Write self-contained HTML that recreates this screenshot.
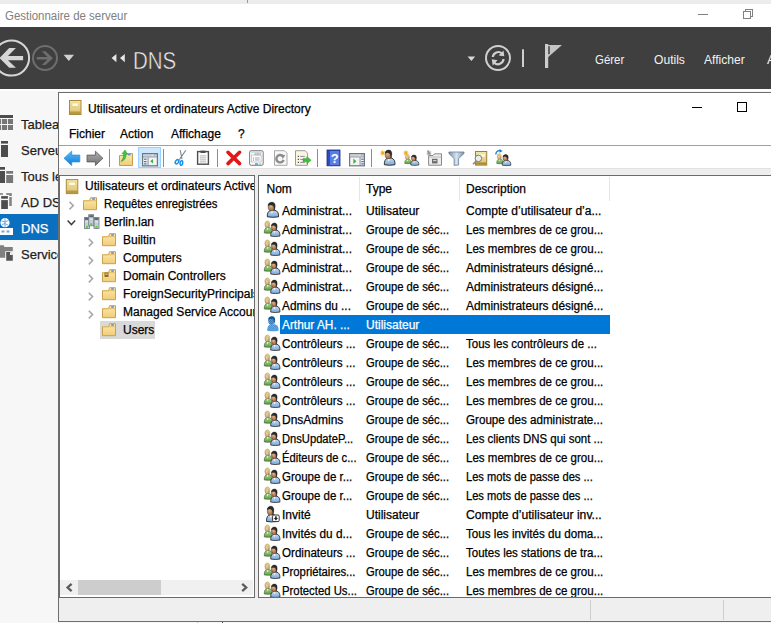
<!DOCTYPE html>
<html><head><meta charset="utf-8">
<style>
*{margin:0;padding:0;box-sizing:border-box}
html,body{width:771px;height:623px;overflow:hidden;background:#f7f7f7;font-family:"Liberation Sans",sans-serif;position:relative}
.a{position:absolute}
.t,.c,.tr,.nav{-webkit-text-stroke:0.25px currentColor}
.t{position:absolute;white-space:nowrap;font-size:12px;line-height:14px;color:#000}
#topstrip{left:0;top:0;width:771px;height:4px;background:#ececec}
#smtitle{left:0;top:4px;width:771px;height:23px;background:#fff}
#hdr{left:0;top:27px;width:771px;height:62px;background:#3f3f3f}
.nav{position:absolute;left:21px;font-size:13px;color:#1e1e1e;white-space:nowrap;line-height:15px}
#win{left:58px;top:92px;width:720px;height:530px;background:#fff;border:1px solid #6e6e6e;border-right:none}
.pane{position:absolute;background:#fff;border:1px solid #6e6e6e;overflow:hidden}
.c{position:absolute;white-space:nowrap;font-size:12px;line-height:19px;color:#000}
.c span{display:inline-block;transform-origin:0 0}
.tr{position:absolute;white-space:nowrap;font-size:12px;line-height:18px;color:#000}
</style></head><body>
<div class="a" id="topstrip"></div>
<div class="a" style="left:247px;top:0;width:1px;height:3px;background:#9a9a9a"></div>
<div class="a" id="smtitle"></div>
<div class="t" style="left:5px;top:9px;color:#808080;font-size:12px;-webkit-text-stroke:0"><span style="display:inline-block;transform-origin:0 0;transform:scaleX(0.955)">Gestionnaire de serveur</span></div>
<div class="a" style="left:698px;top:14px;width:10px;height:1px;background:#808080"></div>
<div class="a" style="left:745px;top:9px;width:8px;height:8px;border:1px solid #808080"></div>
<div class="a" style="left:743px;top:11px;width:8px;height:8px;border:1px solid #808080;background:#fff"></div>

<div class="a" id="hdr"></div>
<svg class="a" style="left:0;top:27px" width="771" height="62" viewBox="0 27 771 62">
 <circle cx="11.5" cy="58" r="17.6" fill="none" stroke="#d6d6d6" stroke-width="2"/>
 <path d="M9.2 48.1 L15.9 48.1 L8 55.9 L23.1 55.9 L23.1 60.2 L8 60.2 L15.9 67.7 L9.2 67.7 L-0.5 57.9 Z" fill="#d6d6d6"/>
 <circle cx="45" cy="58" r="12" fill="none" stroke="#6e6e6e" stroke-width="2"/>
 <path d="M41.8 51.2 L45.4 51.2 L53 58.2 L45.4 64.9 L41.8 64.9 L47.5 59.6 L36.7 59.6 L36.7 57 L47.5 57 Z" fill="#6e6e6e"/>
 <path d="M63.6 54.8 L74 54.8 L68.8 60.9z" fill="#d0d0d0"/>
 <path d="M116.4 54 L116.4 62.2 L111.6 58.1z M124.8 54 L124.8 62.2 L120 58.1z" fill="#e8e8e8"/>
 <path d="M467.6 56.6 L475.2 56.6 L471.4 61.1z" fill="#d8d8d8"/>
 <circle cx="498" cy="58" r="12" fill="none" stroke="#d0d0d0" stroke-width="2"/>
 <path d="M492.8 57 A5.5 5.5 0 0 1 502 53.5" fill="none" stroke="#d0d0d0" stroke-width="2.2"/>
 <path d="M503.5 50.5 L504.3 56.2 L498.6 55.6z" fill="#d0d0d0"/>
 <path d="M503.5 59 A5.5 5.5 0 0 1 494.2 62.7" fill="none" stroke="#d0d0d0" stroke-width="2.2"/>
 <path d="M492.7 65.6 L491.8 59.3 L497.6 60.3z" fill="#d0d0d0"/>
 <rect x="522" y="49.3" width="2" height="17.7" fill="#cfcfcf"/>
 <rect x="545" y="44" width="3.2" height="24" fill="#cdcdcd"/>
 <path d="M548 44.9 L562 44.9 L548 57.2z" fill="#c4c4c4"/>
 <rect x="548.2" y="46.2" width="1.6" height="8" fill="#4a4a4a"/>
</svg>
<div class="t" style="left:133px;top:48px;font-size:23px;line-height:27px;color:#f0f0f0;-webkit-text-stroke:0.5px #3f3f3f"><span style="display:inline-block;transform-origin:0 0;transform:scaleX(0.89)">DNS</span></div>
<div class="t" style="left:595px;top:52px;font-size:13px;line-height:15px;color:#f2f2f2;-webkit-text-stroke:0"><span style="display:inline-block;transform-origin:0 0;transform:scaleX(0.88)">Gérer</span></div>
<div class="t" style="left:654px;top:52px;font-size:13px;line-height:15px;color:#f2f2f2;-webkit-text-stroke:0"><span style="display:inline-block;transform-origin:0 0;transform:scaleX(0.93)">Outils</span></div>
<div class="t" style="left:704px;top:52px;font-size:13px;line-height:15px;color:#f2f2f2;-webkit-text-stroke:0"><span style="display:inline-block;transform-origin:0 0;transform:scaleX(0.93)">Afficher</span></div>
<div class="t" style="left:767px;top:52px;font-size:13px;line-height:15px;color:#f2f2f2;-webkit-text-stroke:0">Aide</div>
<!-- nav -->
<div class="a" style="left:0;top:214px;width:58px;height:26px;background:#0a6fbf"></div>
<div class="nav" style="top:117px">Tableau de bord</div>
<div class="nav" style="top:143px">Serveur local</div>
<div class="nav" style="top:169px">Tous les serveurs</div>
<div class="nav" style="top:195px">AD DS</div>
<div class="nav" style="top:221px;color:#fff">DNS</div>
<div class="nav" style="top:247px">Services de fichiers</div>

<!-- AD window -->
<div class="a" style="left:0;top:89px;width:771px;height:2px;background:#fdfdfd"></div>
<div class="a" id="win"></div>
<div class="a" style="left:69px;top:100px;width:12px;height:15px;background:#e0c060"></div>
<div class="t" style="left:88px;top:102px">Utilisateurs et ordinateurs Active Directory</div>
<div class="a" style="left:692px;top:107px;width:10px;height:1px;background:#000"></div>
<div class="a" style="left:737px;top:102px;width:10px;height:10px;border:1px solid #000"></div>
<div class="t" style="left:69px;top:127px">Fichier</div>
<div class="t" style="left:120px;top:127px">Action</div>
<div class="t" style="left:171px;top:127px">Affichage</div>
<div class="t" style="left:238px;top:127px">?</div>
<div class="a" style="left:59px;top:145px;width:712px;height:1px;background:#a0a0a0"></div>
<div class="a" style="left:59px;top:168px;width:712px;height:7px;background:#eeeeee;border-top:1px solid #e2e2e2"></div>
<!-- panes -->
<div class="a" style="left:59px;top:175px;width:196px;height:423px;border:1px solid #6b6b6b;background:#fff"></div>
<div class="a" style="left:255px;top:175px;width:3px;height:423px;background:#eeeeee"></div>
<div class="a" style="left:258px;top:175px;width:520px;height:423px;border:1px solid #6b6b6b;background:#fff"></div>
<div class="a" style="left:59px;top:598px;width:712px;height:23px;background:#efefef"></div>
<div class="a" style="left:590px;top:600px;width:1px;height:20px;background:#cdcdcd"></div>
<div class="a" style="left:723px;top:600px;width:1px;height:20px;background:#cdcdcd"></div>
<div class="a" style="left:197px;top:622px;width:1px;height:1px;background:#c8c8c8"></div>
<div class="a" style="left:222px;top:622px;width:1px;height:1px;background:#505050"></div>
<!--TREE START-->
<div class="a" style="left:0;top:0;width:254px;height:597px;overflow:hidden">
<div class="tr" style="left:85px;top:177px">Utilisateurs et ordinateurs Active Directory</div>
<div class="tr" style="left:104px;top:195px"><span style="display:inline-block;transform-origin:0 0;transform:scaleX(0.94)">Requêtes enregistrées</span></div>
<div class="tr" style="left:104px;top:213px">Berlin.lan</div>
<div class="tr" style="left:123px;top:231px">Builtin</div>
<div class="tr" style="left:123px;top:249px">Computers</div>
<div class="tr" style="left:123px;top:267px">Domain Controllers</div>
<div class="tr" style="left:123px;top:285px">ForeignSecurityPrincipals</div>
<div class="tr" style="left:123px;top:303px">Managed Service Accounts</div>
<div class="a" style="left:100px;top:321px;width:55px;height:18px;background:#d9d9d9"></div>
<div class="tr" style="left:123px;top:321px">Users</div>
</div>
<div class="a" style="left:60px;top:580px;width:193px;height:15px;background:#f0f0f0"></div>
<div class="a" style="left:78px;top:580px;width:83px;height:15px;background:#cdcdcd"></div>
<svg class="a" style="left:60px;top:580px" width="193" height="15" viewBox="60 580 193 15"><path d="M71.6 583.8 L67.6 587.5 L71.6 591.2" fill="none" stroke="#5a5a5a" stroke-width="2.3"/><path d="M242.2 583.8 L246.2 587.5 L242.2 591.2" fill="none" stroke="#5a5a5a" stroke-width="2.3"/></svg>

<!--TREE END-->
<div class="a" style="left:0;top:0;width:771px;height:597px;overflow:hidden">
<div class="c" style="left:266.5px;top:180px">Nom</div>
<div class="c" style="left:366px;top:180px">Type</div>
<div class="c" style="left:466px;top:180px">Description</div>
<div class="a" style="left:359px;top:177px;width:1px;height:24px;background:#e5e5e5"></div>
<div class="a" style="left:459px;top:177px;width:1px;height:24px;background:#e5e5e5"></div>
<div class="a" style="left:609px;top:177px;width:1px;height:24px;background:#e5e5e5"></div>
<!--LIST START-->
<div class="c" style="left:282.0px;top:202px"><span>Administrat...</span></div>
<div class="c" style="left:366.0px;top:202px"><span>Utilisateur</span></div>
<div class="c" style="left:466.0px;top:202px"><span>Compte d’utilisateur d’a...</span></div>
<div class="c" style="left:282.0px;top:221px"><span>Administrat...</span></div>
<div class="c" style="left:366.0px;top:221px"><span style="transform:scaleX(0.936)">Groupe de séc...</span></div>
<div class="c" style="left:466.0px;top:221px"><span style="transform:scaleX(0.962)">Les membres de ce grou...</span></div>
<div class="c" style="left:282.0px;top:240px"><span>Administrat...</span></div>
<div class="c" style="left:366.0px;top:240px"><span style="transform:scaleX(0.936)">Groupe de séc...</span></div>
<div class="c" style="left:466.0px;top:240px"><span style="transform:scaleX(0.962)">Les membres de ce grou...</span></div>
<div class="c" style="left:282.0px;top:259px"><span>Administrat...</span></div>
<div class="c" style="left:366.0px;top:259px"><span style="transform:scaleX(0.936)">Groupe de séc...</span></div>
<div class="c" style="left:466.0px;top:259px"><span style="transform:scaleX(0.990)">Administrateurs désigné...</span></div>
<div class="c" style="left:282.0px;top:278px"><span>Administrat...</span></div>
<div class="c" style="left:366.0px;top:278px"><span style="transform:scaleX(0.936)">Groupe de séc...</span></div>
<div class="c" style="left:466.0px;top:278px"><span style="transform:scaleX(0.990)">Administrateurs désigné...</span></div>
<div class="c" style="left:282.0px;top:297px"><span style="transform:scaleX(0.984)">Admins du ...</span></div>
<div class="c" style="left:366.0px;top:297px"><span style="transform:scaleX(0.936)">Groupe de séc...</span></div>
<div class="c" style="left:466.0px;top:297px"><span style="transform:scaleX(0.990)">Administrateurs désigné...</span></div>
<div class="lr" style="top:315px">
<div class="a" style="left:280px;top:315px;width:330px;height:19px;background:#0078d7"></div>
<div class="c" style="left:282.0px;top:316px;color:#fff"><span style="transform:scaleX(0.988)">Arthur AH. ...</span></div>
<div class="c" style="left:366.0px;top:316px;color:#fff"><span>Utilisateur</span></div>
<div class="c" style="left:282.0px;top:335px"><span style="transform:scaleX(0.975)">Contrôleurs ...</span></div>
<div class="c" style="left:366.0px;top:335px"><span style="transform:scaleX(0.936)">Groupe de séc...</span></div>
<div class="c" style="left:466.0px;top:335px"><span style="transform:scaleX(0.957)">Tous les contrôleurs de ...</span></div>
<div class="c" style="left:282.0px;top:354px"><span style="transform:scaleX(0.975)">Contrôleurs ...</span></div>
<div class="c" style="left:366.0px;top:354px"><span style="transform:scaleX(0.936)">Groupe de séc...</span></div>
<div class="c" style="left:466.0px;top:354px"><span style="transform:scaleX(0.962)">Les membres de ce grou...</span></div>
<div class="c" style="left:282.0px;top:373px"><span style="transform:scaleX(0.975)">Contrôleurs ...</span></div>
<div class="c" style="left:366.0px;top:373px"><span style="transform:scaleX(0.936)">Groupe de séc...</span></div>
<div class="c" style="left:466.0px;top:373px"><span style="transform:scaleX(0.962)">Les membres de ce grou...</span></div>
<div class="c" style="left:282.0px;top:392px"><span style="transform:scaleX(0.975)">Contrôleurs ...</span></div>
<div class="c" style="left:366.0px;top:392px"><span style="transform:scaleX(0.936)">Groupe de séc...</span></div>
<div class="c" style="left:466.0px;top:392px"><span style="transform:scaleX(0.962)">Les membres de ce grou...</span></div>
<div class="c" style="left:282.0px;top:411px"><span>DnsAdmins</span></div>
<div class="c" style="left:366.0px;top:411px"><span style="transform:scaleX(0.936)">Groupe de séc...</span></div>
<div class="c" style="left:466.0px;top:411px"><span style="transform:scaleX(0.969)">Groupe des administrate...</span></div>
<div class="c" style="left:282.0px;top:430px"><span style="transform:scaleX(0.931)">DnsUpdateP...</span></div>
<div class="c" style="left:366.0px;top:430px"><span style="transform:scaleX(0.936)">Groupe de séc...</span></div>
<div class="c" style="left:466.0px;top:430px"><span style="transform:scaleX(0.951)">Les clients DNS qui sont ...</span></div>
<div class="c" style="left:282.0px;top:449px"><span style="transform:scaleX(0.931)">Éditeurs de c...</span></div>
<div class="c" style="left:366.0px;top:449px"><span style="transform:scaleX(0.936)">Groupe de séc...</span></div>
<div class="c" style="left:466.0px;top:449px"><span style="transform:scaleX(0.962)">Les membres de ce grou...</span></div>
<div class="c" style="left:282.0px;top:468px"><span style="transform:scaleX(0.958)">Groupe de r...</span></div>
<div class="c" style="left:366.0px;top:468px"><span style="transform:scaleX(0.936)">Groupe de séc...</span></div>
<div class="c" style="left:466.0px;top:468px"><span style="transform:scaleX(0.927)">Les mots de passe des ...</span></div>
<div class="c" style="left:282.0px;top:487px"><span style="transform:scaleX(0.958)">Groupe de r...</span></div>
<div class="c" style="left:366.0px;top:487px"><span style="transform:scaleX(0.936)">Groupe de séc...</span></div>
<div class="c" style="left:466.0px;top:487px"><span style="transform:scaleX(0.927)">Les mots de passe des ...</span></div>
<div class="c" style="left:282.0px;top:506px"><span>Invité</span></div>
<div class="c" style="left:366.0px;top:506px"><span>Utilisateur</span></div>
<div class="c" style="left:466.0px;top:506px"><span style="transform:scaleX(1.014)">Compte d’utilisateur inv...</span></div>
<div class="c" style="left:282.0px;top:525px"><span style="transform:scaleX(0.985)">Invités du d...</span></div>
<div class="c" style="left:366.0px;top:525px"><span style="transform:scaleX(0.936)">Groupe de séc...</span></div>
<div class="c" style="left:466.0px;top:525px"><span style="transform:scaleX(0.969)">Tous les invités du doma...</span></div>
<div class="c" style="left:282.0px;top:544px"><span style="transform:scaleX(0.967)">Ordinateurs ...</span></div>
<div class="c" style="left:366.0px;top:544px"><span style="transform:scaleX(0.936)">Groupe de séc...</span></div>
<div class="c" style="left:466.0px;top:544px"><span style="transform:scaleX(0.960)">Toutes les stations de tra...</span></div>
<div class="c" style="left:282.0px;top:563px"><span style="transform:scaleX(0.942)">Propriétaires...</span></div>
<div class="c" style="left:366.0px;top:563px"><span style="transform:scaleX(0.936)">Groupe de séc...</span></div>
<div class="c" style="left:466.0px;top:563px"><span style="transform:scaleX(0.962)">Les membres de ce grou...</span></div>
<div class="c" style="left:282.0px;top:582px"><span style="transform:scaleX(0.944)">Protected Us...</span></div>
<div class="c" style="left:366.0px;top:582px"><span style="transform:scaleX(0.936)">Groupe de séc...</span></div>
<div class="c" style="left:466.0px;top:582px"><span style="transform:scaleX(0.962)">Les membres de ce grou...</span></div>
<!--LIST END-->
</div>
<!--ICONS START-->
<svg class="a" style="left:0;top:0;pointer-events:none" width="771" height="623" viewBox="0 0 771 623">
<defs>
<linearGradient id="gBody" x1="0" y1="0" x2="0" y2="1"><stop offset="0" stop-color="#c4dcf4"/><stop offset="1" stop-color="#7aa6d6"/></linearGradient>
<linearGradient id="gGreen" x1="0" y1="0" x2="0" y2="1"><stop offset="0" stop-color="#a8d890"/><stop offset="1" stop-color="#5a9a40"/></linearGradient>
<radialGradient id="gFace" cx="0.4" cy="0.35" r="0.7"><stop offset="0" stop-color="#e8b890"/><stop offset="1" stop-color="#9a6038"/></radialGradient>
<radialGradient id="gFace2" cx="0.4" cy="0.35" r="0.7"><stop offset="0" stop-color="#f4dcc0"/><stop offset="1" stop-color="#c09060"/></radialGradient>
<linearGradient id="gFold" x1="0" y1="0" x2="0" y2="1"><stop offset="0" stop-color="#fdeab0"/><stop offset="1" stop-color="#f0cc78"/></linearGradient>
<linearGradient id="gBook" x1="0" y1="0" x2="0" y2="1"><stop offset="0" stop-color="#f6e6a8"/><stop offset="1" stop-color="#dcc070"/></linearGradient>
<linearGradient id="gBlue" x1="0" y1="0" x2="0" y2="1"><stop offset="0" stop-color="#58c0f8"/><stop offset="1" stop-color="#0a78d8"/></linearGradient>
<linearGradient id="gGray" x1="0" y1="0" x2="0" y2="1"><stop offset="0" stop-color="#b0b0b0"/><stop offset="1" stop-color="#707070"/></linearGradient>
<linearGradient id="gFun" x1="0" y1="0" x2="1" y2="0"><stop offset="0" stop-color="#7890a8"/><stop offset="0.5" stop-color="#d8e4f0"/><stop offset="1" stop-color="#7890a8"/></linearGradient>
<pattern id="dith" width="2" height="2" patternUnits="userSpaceOnUse"><rect width="2" height="2" fill="#1a7ad0"/><rect width="1" height="1" fill="#9ac0e8"/><rect x="1" y="1" width="1" height="1" fill="#9ac0e8"/></pattern>
<pattern id="dith2" width="2" height="2" patternUnits="userSpaceOnUse"><rect width="2" height="2" fill="#1a7ad0"/><rect width="1" height="1" fill="#c08a60"/><rect x="1" y="1" width="1" height="1" fill="#c08a60"/></pattern>
<pattern id="dith3" width="2" height="2" patternUnits="userSpaceOnUse"><rect width="2" height="2" fill="#1a7ad0"/><rect width="1" height="1" fill="#303030"/><rect x="1" y="1" width="1" height="1" fill="#303030"/></pattern>
<clipPath id="clipList"><rect x="259" y="176" width="512" height="421"/></clipPath>
<g id="person">
 <path d="M0.4 15.2 C0.1 11.5 1.6 8.8 4.5 8.4 L8 8.4 C10.8 8.8 12.2 11.5 11.9 15.2 Q6 16.3 0.4 15.2Z" fill="url(#gBody)" stroke="#1a1a1a" stroke-width="0.9"/>
 <path d="M3.9 8.5 L5.1 12.2 L6.4 8.5Z" fill="#fff"/>
 <ellipse cx="4.6" cy="4.8" rx="3.3" ry="4.3" fill="url(#gFace)" stroke="#2a2a2a" stroke-width="0.5"/>
 <path d="M1.2 3.4 C1.4 0.9 3.4 -0.1 5.3 0 C7.6 0.1 8.7 1.8 8.4 4.4 L7.7 8.6 C7.7 5.8 7.1 3.4 5.1 3 C3.6 2.7 2.2 2.8 1.2 3.4Z" fill="#2a2a2a" stroke="#1a1a1a" stroke-width="0.4"/>
</g>
<g id="personG">
 <path d="M0.4 15.2 C0.1 11.5 1.6 8.8 4.5 8.4 L8 8.4 C10.8 8.8 12.2 11.5 11.9 15.2 Q6 16.3 0.4 15.2Z" fill="url(#gGreen)" stroke="#2e4a20" stroke-width="0.7"/>
 <path d="M3.9 8.5 L5.1 12.2 L6.4 8.5Z" fill="#fff"/>
 <ellipse cx="4.8" cy="4.8" rx="3.3" ry="4.3" fill="url(#gFace2)" stroke="#6a5030" stroke-width="0.4"/>
 <path d="M1.2 4.4 C1.4 0.9 3.4 -0.1 5.3 0 C7.6 0.1 8.9 1.8 8.6 4.4 L8.4 9 C8 5.8 7.4 3.4 5.4 3 C3.6 2.7 2.2 3.2 1.2 4.4Z" fill="#dccc84" stroke="#b8a050" stroke-width="0.4"/>
</g>
<g id="personS">
 <path d="M0.4 15.2 C0.1 11.5 1.6 8.8 4.5 8.4 L8 8.4 C10.8 8.8 12.2 11.5 11.9 15.2 Q6 16.3 0.4 15.2Z" fill="url(#dith)"/>
 <ellipse cx="4.6" cy="4.8" rx="3.3" ry="4.3" fill="url(#dith2)"/>
 <path d="M1.2 3.4 C1.4 0.9 3.4 -0.1 5.3 0 C7.6 0.1 8.7 1.8 8.4 4.4 L7.7 8.6 C7.7 5.8 7.1 3.4 5.1 3 C3.6 2.7 2.2 2.8 1.2 3.4Z" fill="url(#dith3)"/>
</g>
<g id="group">
 <use href="#personG" transform="translate(-0.2,0.7) scale(0.68,0.79)"/>
 <use href="#person" transform="translate(6.2,2.8) scale(0.8,0.86)"/>
</g>
<g id="chr"><path d="M0.8 0.8 L4.6 4.6 L0.8 8.4" fill="none" stroke="#a6a6a6" stroke-width="1.5"/></g>
<g id="fold">
 <path d="M0.5 3.5 H6.5 L7.6 0.5 H13.5 V12.5 H0.5Z" fill="url(#gFold)" stroke="#c8a050" stroke-width="1"/>
 <path d="M0.5 3.5 H13.5" stroke="#e0bc68" stroke-width="1"/>
 <rect x="9.2" y="1" width="2.6" height="1.6" fill="#5a8ed8"/>
</g>
<g id="star"><path d="M3 0 L3.6 2 L5.4 1 L4.3 2.7 L6 3.2 L4.2 3.8 L5.2 5.5 L3.5 4.4 L3 6.2 L2.4 4.4 L0.8 5.5 L1.8 3.8 L0 3.2 L1.7 2.6 L0.7 1 L2.4 2Z" fill="#f8a818"/></g>
</defs>
<rect x="0" y="115" width="13" height="3" fill="#4d4d4d"/>
<rect x="0" y="119" width="1" height="5" fill="#777777"/><rect x="1.9" y="119" width="5.2" height="5" fill="#777777"/><rect x="8" y="119" width="5" height="5" fill="#777777"/>
<rect x="0" y="125" width="1" height="5" fill="#777777"/><rect x="1.9" y="125" width="5.2" height="5" fill="#777777"/><rect x="8" y="125" width="5" height="5" fill="#777777"/>
<rect x="1" y="141" width="7" height="2.6" fill="#4d4d4d"/><rect x="1" y="145" width="7" height="12" fill="#4d4d4d"/>
<rect x="0" y="167" width="5" height="2.7" fill="#4d4d4d"/><rect x="0" y="171" width="5" height="12" fill="#4d4d4d"/>
<rect x="6.2" y="171" width="6.9" height="2.7" fill="#777777"/><rect x="6.2" y="175" width="6.9" height="8" fill="#777777"/>
<rect x="0" y="193.2" width="2.9" height="1.5" fill="#777777"/><rect x="6.2" y="193.2" width="5.6" height="1.6" fill="#777777"/><rect x="9.2" y="194.6" width="2.6" height="1.3" fill="#777777"/><rect x="9.2" y="197" width="2.6" height="9" fill="#858585"/>
<rect x="1.2" y="196.1" width="6.7" height="2.6" fill="#4d4d4d"/><rect x="1.2" y="200.1" width="6.7" height="8.9" fill="#4d4d4d"/>
<circle cx="5" cy="222.7" r="4.6" fill="#fff"/><path d="M1.5 221 Q5 223 8.5 220.5 M2 224.5 Q5 222.5 8 225 M5 218.2 V227" stroke="#5aa0e0" stroke-width="0.9" fill="none"/>
<rect x="0" y="228" width="13" height="7" fill="#fff"/><rect x="1.5" y="230.5" width="3" height="2" fill="#6aaae6"/><rect x="6.5" y="230.5" width="3" height="2" fill="#6aaae6"/>
<path d="M0 245.2 H3.6 Q4.4 245.4 4.2 247.1 H12.8 V251.2 H5.2 V257.7 H0Z" fill="#808080"/><path d="M6.2 252.1 H10 L12.8 255 V260.8 H6.2Z" fill="#555"/><path d="M10 252.1 L12.8 255 H10Z" fill="#f7f7f7"/>
<rect x="69.5" y="100.5" width="11.5" height="14" fill="url(#gBook)" stroke="#a88a38" stroke-width="1"/><rect x="70" y="111.5" width="10.5" height="2.5" fill="#b89840"/><rect x="72" y="103" width="6.5" height="3.3" fill="#fffbe0" stroke="#d8c070" stroke-width="0.5"/>
<path d="M64 158.3 L71.7 151.2 V155.1 H79.8 V161.9 H71.7 V165.5Z" fill="url(#gBlue)" stroke="#3a8ad8" stroke-width="0.8"/>
<path d="M102.9 158.3 L95.4 151.2 V155.1 H87 V161.9 H95.4 V165.5Z" fill="url(#gGray)" stroke="#555" stroke-width="0.8"/>
<rect x="109.0" y="149" width="1" height="18" fill="#8c8c8c"/>
<rect x="163.0" y="149" width="1" height="18" fill="#8c8c8c"/>
<rect x="217.0" y="149" width="1" height="18" fill="#8c8c8c"/>
<rect x="317.0" y="149" width="1" height="18" fill="#8c8c8c"/>
<rect x="371.0" y="149" width="1" height="18" fill="#8c8c8c"/>
<g transform="translate(119,153)"><path d="M0.5 2.5 H6 L7 0.5 H13.5 V12.5 H0.5Z" fill="url(#gFold)" stroke="#c0a050" stroke-width="1"/><rect x="9" y="1" width="2.6" height="1.4" fill="#5a8ed8"/></g>
<path d="M121 161.5 C123 159 124 156 123.5 153.5 L121.8 154 L125 150 L127.8 154.5 L126 154.2 C126.5 157.5 124.5 160.5 121 161.5Z" fill="#3cc83c" stroke="#2a9a2a" stroke-width="0.5"/>
<rect x="138.5" y="147.5" width="22" height="20" fill="#cce8ff" stroke="#99d1ff" stroke-width="1"/>
<rect x="142.6" y="153.6" width="14.8" height="12.2" fill="#f4f4f4" stroke="#6e7680" stroke-width="1.2"/><rect x="143.6" y="154.5" width="9" height="1" fill="#a8b0b8"/><rect x="153.6" y="154.4" width="1.2" height="1.2" fill="#7a828c"/><rect x="155.4" y="154.4" width="1.2" height="1.2" fill="#7a828c"/><rect x="143" y="156.4" width="14" height="1" fill="#8a929c"/><rect x="147.6" y="157.4" width="0.9" height="8" fill="#7a828c"/><rect x="144" y="158.6" width="2.6" height="1.2" fill="#3a7ac8"/><rect x="144" y="161" width="2.6" height="1.2" fill="#3a7ac8"/><rect x="144" y="163.3" width="2.6" height="1.2" fill="#3a7ac8"/><path d="M150.2 161.3 L153 159 V163.6Z" fill="#40b040"/>
<path d="M180.2 150.2 L182 159.2 M185.8 150.2 L179.4 159.6" stroke="#7a8894" stroke-width="1.1"/>
<ellipse cx="177" cy="161.8" rx="1.5" ry="2.3" transform="rotate(35 177 161.8)" fill="#fff" stroke="#1690e6" stroke-width="1.5"/>
<ellipse cx="181.4" cy="163" rx="1.3" ry="2.2" transform="rotate(8 181.4 163)" fill="#fff" stroke="#1690e6" stroke-width="1.5"/>
<rect x="197.6" y="151.6" width="10.8" height="12.6" fill="#fff" stroke="#4e4e4e" stroke-width="1.4"/><rect x="200.5" y="150.6" width="5" height="2.4" fill="#4e4e4e"/>
<rect x="199.8" y="155.5" width="6.4" height="0.8" fill="#a0a0a0"/>
<rect x="199.8" y="157.5" width="6.4" height="0.8" fill="#a0a0a0"/>
<rect x="199.8" y="159.5" width="6.4" height="0.8" fill="#a0a0a0"/>
<rect x="199.8" y="161.5" width="6.4" height="0.8" fill="#a0a0a0"/>
<path d="M228 152.3 L239.6 163.6 M239.6 152.3 L228 163.6" stroke="#e01818" stroke-width="3.6" stroke-linecap="round"/>
<rect x="249.6" y="150.7" width="13.6" height="14.6" rx="1.5" fill="#fcfcfc" stroke="#7a7a7a" stroke-width="1"/><rect x="250.5" y="151.6" width="11.8" height="1" fill="#c0c8d0"/>
<rect x="251.5" y="155" width="9.6" height="7" fill="#fff" stroke="#b0b8c4" stroke-width="0.7"/><rect x="255" y="153.2" width="2.4" height="1.8" fill="none" stroke="#9aa2b0" stroke-width="0.6"/><rect x="258" y="153.2" width="2.4" height="1.8" fill="none" stroke="#9aa2b0" stroke-width="0.6"/>
<rect x="253" y="157.6" width="1" height="1" fill="#20a0f0"/><rect x="255" y="157.5" width="4.6" height="0.9" fill="#999"/><rect x="253" y="159.6" width="1" height="1" fill="#888"/><rect x="255" y="159.5" width="4.6" height="0.9" fill="#999"/>
<rect x="255" y="163.3" width="3" height="1.4" fill="#20a0f0"/><rect x="259" y="163.3" width="2.4" height="1.4" fill="#bbb"/>
<path d="M274.5 150.7 H284.5 L287 153.2 V165.3 H274.5Z" fill="#f8f8f8" stroke="#a8a8a8" stroke-width="1"/>
<path d="M283.6 159.8 A3.7 3.7 0 1 1 282.6 156" fill="none" stroke="#8c8c8c" stroke-width="2.4"/><path d="M281 154.2 L285.4 155.2 L282.6 159Z" fill="#8c8c8c"/>
<path d="M295.5 150.7 H305.2 L307.6 153.2 V165.3 H295.5Z" fill="#fdf6dc" stroke="#9a9a9a" stroke-width="1"/>
<rect x="297.8" y="155.8" width="1.1" height="1.1" fill="#222"/><rect x="300.2" y="155.9" width="4.6" height="0.9" fill="#7a7ab0"/>
<rect x="297.8" y="158.8" width="1.1" height="1.1" fill="#222"/><rect x="300.2" y="158.9" width="4.6" height="0.9" fill="#7a7ab0"/>
<rect x="297.8" y="161.8" width="1.1" height="1.1" fill="#222"/><rect x="300.2" y="161.9" width="4.6" height="0.9" fill="#7a7ab0"/>
<path d="M303 158.6 H306.8 V156.6 L311.2 160.2 L306.8 163.8 V161.8 H303Z" fill="#3cc03c" stroke="#2a9a2a" stroke-width="0.4"/>
<rect x="327" y="150" width="13" height="15.8" fill="#2c4cc0"/><rect x="330" y="151" width="9.5" height="14" fill="#5a7ee0"/><rect x="327" y="150" width="13" height="15.8" fill="none" stroke="#1a2c80" stroke-width="0.8"/>
<text x="334.8" y="162.8" font-family="Liberation Sans" font-weight="bold" font-size="13" fill="#fff" text-anchor="middle">?</text>
<rect x="349.6" y="153.6" width="14.8" height="12.2" fill="#f4f4f4" stroke="#6e7680" stroke-width="1.2"/><rect x="350.6" y="154.5" width="9" height="1" fill="#a8b0b8"/><rect x="360.6" y="154.4" width="1.2" height="1.2" fill="#7a828c"/><rect x="362.4" y="154.4" width="1.2" height="1.2" fill="#7a828c"/><rect x="350" y="156.4" width="14" height="1" fill="#8a929c"/><rect x="359.6" y="157.4" width="0.9" height="8" fill="#7a828c"/><rect x="361.3" y="158.6" width="2.4" height="1.2" fill="#3a7ac8"/><rect x="361.3" y="161" width="2.4" height="1.2" fill="#3a7ac8"/><rect x="361.3" y="163.3" width="2.4" height="1.2" fill="#3a7ac8"/><path d="M353.4 158.6 L356.4 161.3 L353.4 164Z" fill="#40b040"/>
<use href="#person" transform="translate(384,150) scale(0.92,0.97)"/>
<use href="#star" transform="translate(379.7,149.8)"/>
<use href="#personG" transform="translate(404.5,154.3) scale(0.58,0.6)"/>
<use href="#person" transform="translate(410.5,155) scale(0.7,0.66)"/>
<use href="#star" transform="translate(402.9,149.8)"/>
<path d="M428.6 155.5 H433 L434.5 153.8 H441.5 V165.2 H428.6Z" fill="#ececec" stroke="#8a8a8a" stroke-width="1"/><rect x="429" y="156.5" width="12" height="1" fill="#bbb"/><rect x="432" y="158.8" width="5.5" height="4.6" fill="#6a6a6a"/><rect x="433" y="160" width="3.5" height="1.2" fill="#ccc"/>
<path d="M429 150 L429.6 152 L431.4 151 L430.3 152.7 L432 153.2 L430.2 153.8 L431.2 155.5 L429.5 154.4 L429 156.2 L428.4 154.4 L426.8 155.5 L427.8 153.8 L426 153.2 L427.7 152.6 L426.7 151Z" fill="#9a9a9a"/>
<path d="M448.9 152 H464 V153.5 L458.6 158.6 V165 L454.1 165.4 V158.6 L448.9 153.5Z" fill="url(#gFun)" stroke="#6a8098" stroke-width="0.8"/>
<rect x="475.5" y="151.5" width="11.2" height="13.6" fill="url(#gBook)" stroke="#a08030" stroke-width="1"/><rect x="476" y="162.4" width="10.2" height="2.4" fill="#b08c30"/><rect x="479" y="154" width="6" height="3" fill="#fff6d0"/>
<path d="M473 164.3 L476.6 160.6" stroke="#8a8a8a" stroke-width="1.6"/><circle cx="478.4" cy="158.4" r="3.3" fill="#e6f2f8" fill-opacity="0.85" stroke="#707070" stroke-width="0.9"/>
<use href="#personG" transform="translate(496.5,153.6) scale(0.56,0.65)"/>
<use href="#person" transform="translate(502,154.6) scale(0.74,0.7)"/>
<path d="M495.8 154.6 C495.8 151.6 497.8 150.3 500.2 150.8" fill="none" stroke="#1a7ad8" stroke-width="1.3"/><path d="M499.4 149 L502.6 151 L499.6 152.8Z" fill="#1a7ad8"/>
<rect x="66.3" y="179.6" width="11.5" height="14" fill="url(#gBook)" stroke="#a88a38" stroke-width="1"/><rect x="66.8" y="190.6" width="10.5" height="2.5" fill="#b89840"/><rect x="68.8" y="182.1" width="6.5" height="3.3" fill="#fffbe0" stroke="#d8c070" stroke-width="0.5"/>
<use href="#chr" transform="translate(68.7,201)"/>
<use href="#fold" transform="translate(83,197.2)"/>
<path d="M67.6 220.6 L71.4 224.6 L75.2 220.6" fill="none" stroke="#404040" stroke-width="1.5"/>
<rect x="84.5" y="217.4" width="5" height="11.1" fill="#c4ccd4" stroke="#707880" stroke-width="0.8"/><rect x="85" y="217.9" width="4" height="2" fill="#5a6470"/><rect x="85.2" y="221.4" width="3.6" height="1" fill="#e8eef4"/><rect x="86" y="226.0" width="2" height="1.8" fill="#50d030"/><rect x="94.0" y="217.4" width="5" height="11.1" fill="#c4ccd4" stroke="#707880" stroke-width="0.8"/><rect x="94.5" y="217.9" width="4" height="2" fill="#5a6470"/><rect x="94.7" y="221.4" width="3.6" height="1" fill="#e8eef4"/><rect x="95.5" y="226.0" width="2" height="1.8" fill="#50d030"/><rect x="88.7" y="214.7" width="5" height="11.1" fill="#c4ccd4" stroke="#707880" stroke-width="0.8"/><rect x="89.2" y="215.2" width="4" height="2" fill="#5a6470"/><rect x="89.4" y="218.7" width="3.6" height="1" fill="#e8eef4"/><rect x="90.2" y="223.29999999999998" width="2" height="1.8" fill="#50d030"/>
<use href="#chr" transform="translate(88,238)"/>
<use href="#fold" transform="translate(102,233.2)"/>
<use href="#chr" transform="translate(88,256)"/>
<use href="#fold" transform="translate(102,251.2)"/>
<use href="#chr" transform="translate(88,274)"/>
<use href="#fold" transform="translate(102,269.2)"/>
<use href="#chr" transform="translate(88,292)"/>
<use href="#fold" transform="translate(102,287.2)"/>
<use href="#chr" transform="translate(88,310)"/>
<use href="#fold" transform="translate(102,305.2)"/>
<rect x="104.5" y="272.5" width="4" height="4.5" fill="#8a7020"/><rect x="105.3" y="273.5" width="2.4" height="1.2" fill="#e0d090"/>
<use href="#fold" transform="translate(102,323.2)"/>
<g clip-path="url(#clipList)">
<use href="#person" transform="translate(266.9,202.2) scale(0.98,0.96)"/>
<use href="#group" transform="translate(264.2,220.2)"/>
<use href="#group" transform="translate(264.2,239.2)"/>
<use href="#group" transform="translate(264.2,258.2)"/>
<use href="#group" transform="translate(264.2,277.2)"/>
<use href="#group" transform="translate(264.2,296.2)"/>
<use href="#personS" transform="translate(266.9,316.2) scale(0.98,0.96)"/>
<use href="#group" transform="translate(264.2,334.2)"/>
<use href="#group" transform="translate(264.2,353.2)"/>
<use href="#group" transform="translate(264.2,372.2)"/>
<use href="#group" transform="translate(264.2,391.2)"/>
<use href="#group" transform="translate(264.2,410.2)"/>
<use href="#group" transform="translate(264.2,429.2)"/>
<use href="#group" transform="translate(264.2,448.2)"/>
<use href="#group" transform="translate(264.2,467.2)"/>
<use href="#group" transform="translate(264.2,486.2)"/>
<use href="#person" transform="translate(266.2,506.2) scale(0.9,1)"/>
<rect x="272.6" y="515" width="6.6" height="6.6" rx="1.2" fill="#fff" stroke="#222" stroke-width="0.9"/>
<path d="M275.1 516.3 H276.7 V518 H278 L275.9 520.4 L273.8 518 H275.1Z" fill="#222"/>
<use href="#group" transform="translate(264.2,524.2)"/>
<use href="#group" transform="translate(264.2,543.2)"/>
<use href="#group" transform="translate(264.2,562.2)"/>
<use href="#group" transform="translate(264.2,581.2)"/>
</g>
</svg>
<!--ICONS END-->
</body></html>
